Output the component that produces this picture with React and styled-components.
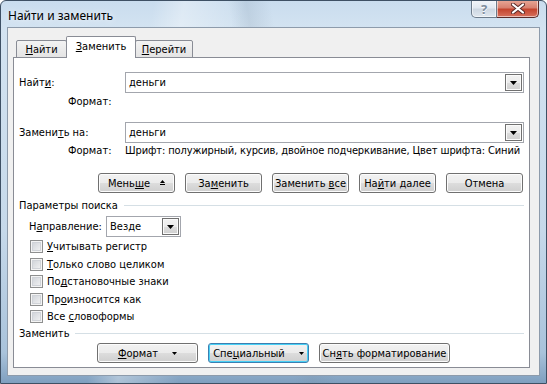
import React from "react";
import styled, { createGlobalStyle } from "styled-components";

const Global = createGlobalStyle`
  html, body {
    margin: 0;
    padding: 0;
  }
  body {
    width: 547px;
    height: 384px;
    overflow: hidden;
    background: #ffffff;
  }
  u {
    text-decoration: underline;
    text-underline-offset: 1px;
  }
`;

const Window = styled.div`
  width: 547px;
  height: 384px;
  box-sizing: border-box;
  display: flex;
  flex-direction: column;
  border: 1px solid #3e5064;
  border-radius: 6px 6px 0 0;
  overflow: hidden;
  background:
    linear-gradient(100deg, transparent 25%, rgba(255, 255, 255, 0.35) 30%, transparent 40%),
    linear-gradient(80deg, transparent 48%, rgba(120, 140, 160, 0.18) 51%, transparent 55%),
    linear-gradient(to bottom, #c9dcee 0%, #d3e3f1 7%, #c6d9ea 60%, #a9c3db 92%, #7f9fbf 100%);
  font-family: "DejaVu Sans Condensed", "Liberation Sans", sans-serif;
  font-size: 11px;
  color: #000;
`;

const TitleBar = styled.div`
  height: 26px;
  display: flex;
  align-items: flex-start;
`;

const Title = styled.div`
  padding: 7px 0 0 7px;
  font-family: "Noto Sans", "Liberation Sans", sans-serif;
  font-size: 12px;
  line-height: 15px;
  color: #000;
  text-shadow: 0 0 6px rgba(255, 255, 255, 0.9);
`;

const Caption = styled.div`
  margin: -1px 7px 0 auto;
  display: flex;
  height: 18px;
`;

const CapButton = styled.div`
  box-sizing: border-box;
  width: ${(p) => p.$w}px;
  height: 18px;
  display: flex;
  align-items: center;
  justify-content: center;
  border: 1px solid ${(p) => (p.$close ? "#5a2c2a" : "#6c7b8b")};
  border-top: none;
  border-left: ${(p) => (p.$close ? "none" : undefined)};
  border-radius: ${(p) => (p.$close ? "0 0 5px 0" : "0 0 0 5px")};
  box-shadow: inset 0 0 0 1px rgba(255, 255, 255, 0.55);
  background: ${(p) =>
    p.$close
      ? "linear-gradient(to bottom, #e9a999 0%, #d88170 45%, #c4452f 55%, #d7715e 100%)"
      : "linear-gradient(to bottom, #f3f6fa 0%, #e2e9f1 45%, #cdd7e2 55%, #dfe7ef 100%)"};
`;

const HelpGlyph = styled.span`
  font-family: "Noto Sans", "Liberation Sans", sans-serif;
  font-size: 13px;
  font-weight: bold;
  line-height: 14px;
  color: #7e8c9c;
  text-shadow: 0 1px 0 #fff;
`;

const Client = styled.div`
  flex: 1;
  margin: 0 6px 7px 6px;
  box-sizing: border-box;
  border: 1px solid #8d9bab;
  background: #f0f0f0;
  padding: 8px 9px 7px 5px;
  display: flex;
  flex-direction: column;
`;

const TabBar = styled.div`
  height: 22px;
  margin-bottom: -1px;
  padding-left: 3px;
  display: flex;
  align-items: flex-end;
  position: relative;
  z-index: 1;
`;

const Tab = styled.div`
  box-sizing: border-box;
  width: ${(p) => p.$w}px;
  height: ${(p) => (p.$active ? 22 : 18)}px;
  margin-left: ${(p) => (p.$first ? 0 : -1)}px;
  border: 1px solid #898c95;
  border-bottom: ${(p) => (p.$active ? "none" : "1px solid #898c95")};
  border-radius: 2px 2px 0 0;
  background: ${(p) =>
    p.$active ? "#ffffff" : "linear-gradient(to bottom, #f3f3f3, #e4e4e4)"};
  position: relative;
  z-index: ${(p) => (p.$active ? 2 : 1)};
  display: flex;
  align-items: center;
  justify-content: center;
  padding-bottom: ${(p) => (p.$active ? 2 : 0)}px;
`;

const Panel = styled.div`
  flex: 1;
  box-sizing: border-box;
  background: #ffffff;
  border: 1px solid #898c95;
  padding: 0 5px;
  display: flex;
  flex-direction: column;
`;

const FieldRow = styled.div`
  display: flex;
  align-items: center;
  height: 21px;
  margin-top: ${(p) => p.$mt}px;
`;

const Label = styled.div`
  box-sizing: border-box;
  width: ${(p) => p.$w}px;
  padding-left: ${(p) => p.$pl || 0}px;
  flex-shrink: 0;
  white-space: nowrap;
`;

const Combo = styled.div`
  flex: 1;
  box-sizing: border-box;
  height: 21px;
  border: 1px solid #a3a6ad;
  background: #fff;
  display: flex;
  align-items: center;
  padding: 0 1px 0 3px;
`;

const ComboText = styled.div`
  flex: 1;
`;

const DropButton = styled.div`
  box-sizing: border-box;
  width: 17px;
  height: 17px;
  border: 1px solid #707070;
  box-shadow: inset 0 0 0 1px #fafafa;
  background: linear-gradient(to bottom, #f2f2f2 0%, #ebebeb 50%, #dddddd 51%, #cfcfcf 100%);
  display: flex;
  align-items: center;
  justify-content: center;
`;

const Select = styled(Combo)`
  flex: none;
  width: 75px;
`;

const FormatRow = styled.div`
  display: flex;
  align-items: center;
  height: ${(p) => p.$h}px;
  white-space: nowrap;
`;

const FormatValue = styled.span`
  letter-spacing: -0.12px;
`;

const ButtonRow = styled.div`
  display: flex;
  gap: 10px;
  justify-content: ${(p) => (p.$end ? "flex-end" : "flex-start")};
  padding: ${(p) => (p.$end ? "0 1px 0 0" : "0 0 0 78px")};
  margin-top: ${(p) => p.$mt}px;
`;

const Button = styled.div`
  box-sizing: border-box;
  width: ${(p) => p.$w}px;
  height: 20px;
  border: 1px solid ${(p) => (p.$default ? "#3c7fb1" : "#707070")};
  border-radius: 3px;
  box-shadow: inset 0 0 0 1px ${(p) => (p.$default ? "#48d1f6" : "#fcfcfc")};
  background: linear-gradient(to bottom, #f2f2f2 0%, #ebebeb 50%, #dddddd 51%, #cfcfcf 100%);
  display: flex;
  align-items: center;
  justify-content: center;
  gap: ${(p) => p.$gap || 0}px;
  white-space: nowrap;
`;

const GroupHeader = styled.div`
  display: flex;
  align-items: center;
  height: ${(p) => p.$h}px;
  margin-top: ${(p) => p.$mt}px;
  white-space: nowrap;

  &::after {
    content: "";
    flex: 1;
    height: 1px;
    margin-left: 6px;
    background: #d5dfe5;
  }
`;

const CheckRow = styled.div`
  display: flex;
  align-items: center;
  gap: 4px;
  height: 17.5px;
  padding-left: 11px;
  &:first-of-type {
    margin-top: 1px;
  }
`;

const Box = styled.div`
  box-sizing: border-box;
  width: 13px;
  height: 13px;
  border: 1px solid #8e8f8f;
  background: #fff;
  box-shadow: inset 0 0 0 1px #f4f4f4, inset 0 0 0 2px #d0d3d8;
  background-image: linear-gradient(135deg, #cbcfd5 0%, #f6f6f6 100%);
`;

const Checks = styled.div`
  display: flex;
  flex-direction: column;
`;

function Arrow() {
  return (
    <svg width="7" height="4" viewBox="0 0 7 4">
      <path d="M0 0h7L3.5 4z" fill="#000" />
    </svg>
  );
}

function SmallArrow() {
  return (
    <svg width="5" height="3" viewBox="0 0 5 3">
      <path d="M0 0h5L2.5 3z" fill="#000" />
    </svg>
  );
}

function LessIcon() {
  return (
    <svg width="5" height="6" viewBox="0 0 5 6">
      <path d="M2.5 0L5 3H0z" fill="#000" />
      <rect x="0" y="4" width="5" height="1" fill="#000" />
    </svg>
  );
}

function CloseIcon() {
  return (
    <svg width="14" height="11" viewBox="0 0 14 11">
      <path d="M2 1.5l10 8M12 1.5l-10 8" stroke="#5a2a28" strokeWidth="4" strokeLinecap="round" />
      <path d="M2 1.5l10 8M12 1.5l-10 8" stroke="#ffffff" strokeWidth="2.2" strokeLinecap="round" />
    </svg>
  );
}

export default function App() {
  return (
    <>
      <Global />
      <Window>
        <TitleBar>
          <Title>Найти и заменить</Title>
          <Caption>
            <CapButton $w={26}>
              <HelpGlyph>?</HelpGlyph>
            </CapButton>
            <CapButton $w={42} $close>
              <CloseIcon />
            </CapButton>
          </Caption>
        </TitleBar>
        <Client>
          <TabBar>
            <Tab $w={51} $first>
              <span>
                <u>Н</u>айти
              </span>
            </Tab>
            <Tab $w={70} $active>
              <span>
                <u>З</u>аменить
              </span>
            </Tab>
            <Tab $w={58}>
              <span>
                <u>П</u>ерейти
              </span>
            </Tab>
          </TabBar>
          <Panel>
            <FieldRow $mt={14}>
              <Label $w={106}>
                Найт<u>и</u>:
              </Label>
              <Combo>
                <ComboText>деньги</ComboText>
                <DropButton>
                  <Arrow />
                </DropButton>
              </Combo>
            </FieldRow>
            <FormatRow $h={16}>
              <Label $w={106} $pl={49}>
                Формат:
              </Label>
            </FormatRow>
            <FieldRow $mt={13}>
              <Label $w={106}>
                Замени<u>т</u>ь на:
              </Label>
              <Combo>
                <ComboText>деньги</ComboText>
                <DropButton>
                  <Arrow />
                </DropButton>
              </Combo>
            </FieldRow>
            <FormatRow $h={15}>
              <Label $w={106} $pl={49}>
                Формат:
              </Label>
              <FormatValue>
                Шрифт: полужирный, курсив, двойное подчеркивание, Цвет шрифта: Синий
              </FormatValue>
            </FormatRow>
            <ButtonRow $end $mt={15}>
              <Button $w={77} $gap={10}>
                <span>
                  Мень<u>ш</u>е
                </span>
                <LessIcon />
              </Button>
              <Button $w={77}>
                <span>
                  За<u>м</u>енить
                </span>
              </Button>
              <Button $w={77}>
                <span>
                  Заменить <u>в</u>се
                </span>
              </Button>
              <Button $w={77}>
                <span>
                  На<u>й</u>ти далее
                </span>
              </Button>
              <Button $w={77}>Отмена</Button>
            </ButtonRow>
            <GroupHeader $h={16} $mt={4}>
              Параметры поиска
            </GroupHeader>
            <FieldRow $mt={3}>
              <Label $w={87} $pl={10}>
                Н<u>а</u>правление:
              </Label>
              <Select>
                <ComboText>Везде</ComboText>
                <DropButton>
                  <Arrow />
                </DropButton>
              </Select>
            </FieldRow>
            <Checks>
              <CheckRow>
                <Box />
                <span>
                  <u>У</u>читывать регистр
                </span>
              </CheckRow>
              <CheckRow>
                <Box />
                <span>
                  <u>Т</u>олько слово целиком
                </span>
              </CheckRow>
              <CheckRow>
                <Box />
                <span>
                  По<u>д</u>становочные знаки
                </span>
              </CheckRow>
              <CheckRow>
                <Box />
                <span>
                  Пр<u>о</u>износится как
                </span>
              </CheckRow>
              <CheckRow>
                <Box />
                <span>
                  Все <u>с</u>ловоформы
                </span>
              </CheckRow>
            </Checks>
            <GroupHeader $h={15} $mt={0}>
              Заменить
            </GroupHeader>
            <ButtonRow $mt={2.5}>
              <Button $w={101} $gap={14}>
                <span>
                  <u>Ф</u>ормат
                </span>
                <SmallArrow />
              </Button>
              <Button $w={101} $gap={14} $default>
                <span>
                  Спе<u>ц</u>иальный
                </span>
                <SmallArrow />
              </Button>
              <Button $w={131}>
                <span>
                  Сн<u>я</u>ть форматирование
                </span>
              </Button>
            </ButtonRow>
          </Panel>
        </Client>
      </Window>
    </>
  );
}
